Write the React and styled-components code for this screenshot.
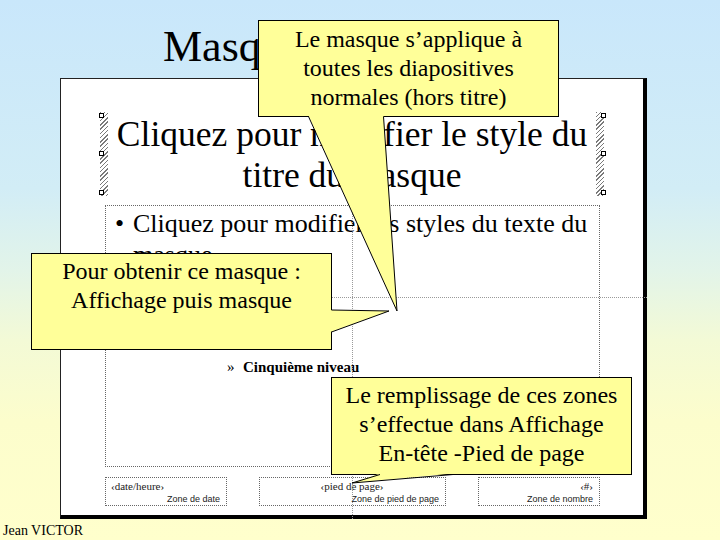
import React from 'react';
import styled, { createGlobalStyle } from 'styled-components';

const GlobalStyle = createGlobalStyle`
  html, body {
    margin: 0;
    padding: 0;
  }
  body {
    font-family: "Liberation Serif", "DejaVu Serif", serif;
    color: #000;
  }
`;

const Page = styled.div`
  position: relative;
  width: 720px;
  height: 540px;
  overflow: hidden;
  display: flex;
  flex-direction: column;
  font-family: "Liberation Serif", "DejaVu Serif", serif;
  background: linear-gradient(to bottom, #c9e7fb 0%, #d2edf6 35%, #e2f4e9 50%, #f3fad6 63%, #fcfdcc 78%, #ffffcc 100%);
`;

const Heading = styled.h1`
  margin: 0;
  height: 78px;
  flex: none;
  box-sizing: border-box;
  padding: 25px 0 0 163px;
  font-weight: normal;
  font-size: 44px;
  line-height: 44px;
`;

const Slide = styled.div`
  position: relative;
  flex: none;
  margin-left: 60px;
  width: 587px;
  height: 441px;
  box-sizing: border-box;
  background: #fff;
  border: 1px solid #222;
  border-right: 4px solid #000;
  border-bottom: 4px solid #000;
  padding-top: 33px;
  display: flex;
  flex-direction: column;
`;

const Guide = styled.div`
  position: absolute;
  ${p => p.$vertical
    ? `top: 0; bottom: -4px; left: ${p.$at}px; border-left: 1px dotted #9a9a9a;`
    : `left: 0; right: -4px; top: ${p.$at}px; border-top: 1px dotted #9a9a9a;`}
`;

const TitleFrame = styled.div`
  margin-left: 39px;
  width: 504px;
  height: 84px;
  display: flex;
`;

const Hatch = styled.div`
  position: relative;
  width: 8px;
  background: repeating-linear-gradient(135deg, #7a7a7a 0 1px, #fff 1px 3px);
`;

const Handle = styled.span`
  position: absolute;
  left: ${p => (p.$right ? '5px' : '-1px')};
  top: ${p => p.$top}px;
  width: 3px;
  height: 3px;
  border: 1px solid #000;
  background: #fff;
`;

const TitleText = styled.div`
  flex: 1;
  padding-top: 2px;
  text-align: center;
  font-size: 35.5px;
  line-height: 41px;
`;

const BodyBox = styled.div`
  margin: 9px 0 0 44px;
  width: 495px;
  height: 262px;
  box-sizing: border-box;
  border: 1px dotted #666;
  padding: 2px 0 0 9px;
`;

const BulletRow = styled.div`
  display: flex;
  font-size: 26px;
  line-height: 31px;
  width: 480px;
`;

const Bullet = styled.span`
  flex: none;
  width: 18px;
`;

const Level = styled.div`
  display: flex;
  margin: ${p => p.$gap}px 0 0 ${p => p.$indent}px;
  font-size: 15px;
  line-height: 18px;
  font-weight: bold;
`;

const LevelMark = styled.span`
  width: 16px;
  font-weight: normal;
`;

const FooterRow = styled.div`
  display: flex;
  gap: 32px;
  margin: 10px 0 0 44px;
`;

const FooterBox = styled.div`
  width: ${p => p.$w}px;
  height: 29px;
  box-sizing: border-box;
  border: 1px dotted #666;
  padding: 2px 6px 0 5px;
  display: flex;
  flex-direction: column;
`;

const FieldCode = styled.div`
  font-size: 11px;
  line-height: 12px;
  color: #222;
  text-align: ${p => p.$align};
`;

const ZoneName = styled.div`
  margin-top: 2px;
  font-family: "Liberation Sans", Arial, sans-serif;
  font-size: 9px;
  line-height: 11px;
  color: #222;
  text-align: right;
`;

const Author = styled.div`
  margin-top: 4px;
  padding-left: 3px;
  font-size: 14px;
  line-height: 16px;
`;

const Callout = styled.div`
  position: absolute;
  z-index: 2;
  left: ${p => p.$x}px;
  top: ${p => p.$y}px;
  width: 301px;
  height: ${p => p.$h}px;
  box-sizing: border-box;
  padding-top: ${p => p.$pad}px;
  background: #ffff99;
  border: 1px solid #000;
  text-align: center;
  font-size: 24px;
  line-height: 29px;
`;

const Pointers = styled.svg`
  position: absolute;
  z-index: 3;
  left: 0;
  top: 0;
  pointer-events: none;
`;

const pointers = [
  { fill: '308.5,115.5 397,311 383.5,115.5', line: '308.5,116.5 397,311 383.5,116.5' },
  { fill: '330.5,310 389,311 330.5,332', line: '331.5,310 389,311 331.5,332' },
  { fill: '380,473.5 352,483 453,473.5', line: '380,474.5 352,483 453,474.5' },
];

const footers = [
  { w: 122, code: '‹date/heure›', align: 'left', zone: 'Zone de date' },
  { w: 187, code: '‹pied de page›', align: 'center', zone: 'Zone de pied de page' },
  { w: 122, code: '‹#›', align: 'right', zone: 'Zone de nombre' },
];

export default function App() {
  return (
    <Page>
      <GlobalStyle />
      <Heading>Masque</Heading>

      <Slide>
        <Guide $at={218} />
        <Guide $vertical $at={291} />

        <TitleFrame>
          <Hatch>
            <Handle $top={1} />
            <Handle $top={39} />
            <Handle $top={78} />
          </Hatch>
          <TitleText>
            Cliquez pour modifier le style du<br />titre du masque
          </TitleText>
          <Hatch>
            <Handle $right $top={1} />
            <Handle $right $top={39} />
            <Handle $right $top={78} />
          </Hatch>
        </TitleFrame>

        <BodyBox>
          <BulletRow>
            <Bullet>•</Bullet>
            <span>Cliquez pour modifier les styles du texte du<br />masque</span>
          </BulletRow>
          <Level $gap={88} $indent={112}>
            <LevelMark>»</LevelMark>
            <span>Cinquième niveau</span>
          </Level>
        </BodyBox>

        <FooterRow>
          {footers.map(f => (
            <FooterBox key={f.zone} $w={f.w}>
              <FieldCode $align={f.align}>{f.code}</FieldCode>
              <ZoneName>{f.zone}</ZoneName>
            </FooterBox>
          ))}
        </FooterRow>
      </Slide>

      <Author>Jean VICTOR</Author>

      <Callout $x={258} $y={20} $h={97} $pad={3.5}>
        Le masque s’applique à<br />toutes les diapositives<br />normales (hors titre)
      </Callout>
      <Callout $x={31} $y={253} $h={97} $pad={2.5}>
        Pour obtenir ce masque :<br />Affichage puis masque
      </Callout>
      <Callout $x={331} $y={377} $h={98} $pad={2.5}>
        Le remplissage de ces zones<br />s’effectue dans Affichage<br />En-tête -Pied de page
      </Callout>

      <Pointers width="720" height="540" viewBox="0 0 720 540">
        {pointers.map((p, i) => (
          <g key={i}>
            <polygon points={p.fill} fill="#ffff99" />
            <polyline points={p.line} fill="none" stroke="#000" strokeWidth="1" />
          </g>
        ))}
      </Pointers>
    </Page>
  );
}
